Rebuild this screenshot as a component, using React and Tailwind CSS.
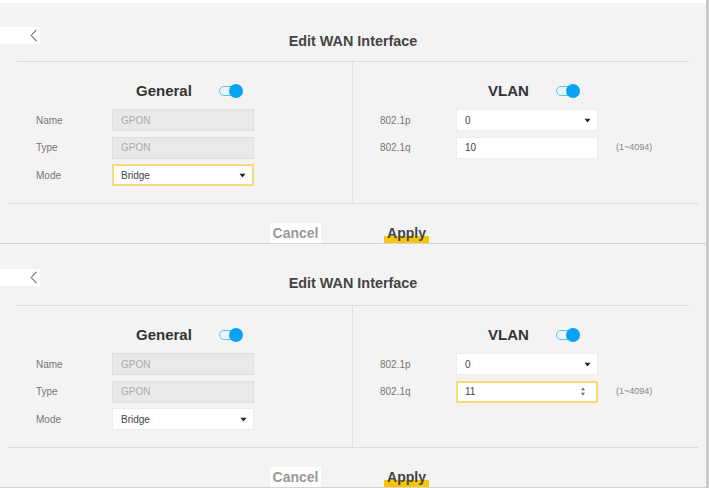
import React from "react";

const font = { fontFamily: '"Liberation Sans", Arial, sans-serif' };

function Toggle() {
  return (
    <div className="relative flex h-[14px] w-[25px] items-center">
      <div className="h-[10px] w-[18px] rounded-full border border-[#63bdf0] bg-[#eaf6fd]" />
      <div className="ml-[-8px] h-[14px] w-[14px] rounded-full bg-[#0aa2f5]" />
    </div>
  );
}

function Caret() {
  return (
    <svg width="7" height="5" viewBox="0 0 7 5" className="mr-[6px]">
      <path d="M0.5 0.8 L6.5 0.8 L3.5 4.6 Z" fill="#222" />
    </svg>
  );
}

function Spinner() {
  return (
    <svg width="6" height="11" viewBox="0 0 6 11" className="mr-[10px]">
      <path d="M1 4.2 L5 4.2 L3 1.4 Z" fill="#666" />
      <path d="M1 6.8 L5 6.8 L3 9.6 Z" fill="#666" />
    </svg>
  );
}

function Field({ value, kind, focused }) {
  const border = focused
    ? "border-2 border-[#f6d978] pl-[7px]"
    : kind === "disabled"
    ? "border border-[#dedede] pl-[8px]"
    : "border border-[#ececec] pl-[8px]";
  const bg = kind === "disabled" ? "bg-[#e9e9e9] text-[#aaaaaa]" : "bg-white text-[#444]";
  return (
    <div
      className={`flex h-[22px] w-[142px] items-center justify-between text-[10px] ${border} ${bg}`}
    >
      <span>{value}</span>
      {kind === "select" && <Caret />}
      {kind === "number" && focused && <Spinner />}
    </div>
  );
}

function Row({ label, children }) {
  return (
    <div className="flex h-[22px] items-center">
      <div className="w-[76px] text-[10px] text-[#777]">{label}</div>
      {children}
    </div>
  );
}

function Panel({ modeFocused, vlanFocused, vlanValue, topStrip }) {
  return (
    <div className="flex h-[244px] flex-col border-b border-[#d4d4d4] bg-[#f3f3f3]">
      <div className="flex h-[61px] items-start">
        <div className={`flex w-full items-start ${topStrip ? "border-t-[3px] border-white" : ""}`}>
          <div className={`flex h-[17px] w-[40px] items-center justify-end bg-white pr-[2px] ${topStrip ? "mt-[24px]" : "mt-[25px]"}`}>
            <svg width="8" height="13" viewBox="0 0 8 13">
              <path d="M6.5 0.8 L1.2 6.5 L6.5 12.2" stroke="#333" strokeWidth="1" fill="none" />
            </svg>
          </div>
          <div className={`flex-1 text-center text-[14.4px] font-bold leading-[18px] text-[#444] ${topStrip ? "mt-[29px]" : "mt-[30px]"}`}>
            Edit WAN Interface
          </div>
          <div className="w-[40px]" />
        </div>
      </div>
      <div className="mx-[17px] h-px bg-[#dcdcdc]" />
      <div className="mx-[17px] flex h-[141px]">
        <div className="w-[336px] border-r border-[#e2e2e2]">
          <div className="ml-[119px] mt-[19px] flex h-[20px] items-center gap-[27px]">
            <span className="text-[15px] font-bold text-[#333]">General</span>
            <Toggle />
          </div>
          <div className="ml-[19px] mt-[8px] flex flex-col gap-[5.5px]">
            <Row label="Name">
              <Field value="GPON" kind="disabled" />
            </Row>
            <Row label="Type">
              <Field value="GPON" kind="disabled" />
            </Row>
            <Row label="Mode">
              <Field value="Bridge" kind="select" focused={modeFocused} />
            </Row>
          </div>
        </div>
        <div className="flex-1">
          <div className="ml-[135px] mt-[19px] flex h-[20px] items-center gap-[27px]">
            <span className="text-[15px] font-bold text-[#333]">VLAN</span>
            <Toggle />
          </div>
          <div className="ml-[27px] mt-[8px] flex flex-col gap-[5.5px]">
            <Row label="802.1p">
              <Field value="0" kind="select" />
            </Row>
            <Row label="802.1q">
              <Field value={vlanValue} kind="number" focused={vlanFocused} />
              <span className="ml-[18px] text-[9px] text-[#888]">(1~4094)</span>
            </Row>
          </div>
        </div>
      </div>
      <div className="mx-[8px] h-px bg-[#dcdcdc]" />
      <div className="mt-[19px] flex">
        <div className="ml-[270px] flex h-[20px] w-[51px] items-center justify-center bg-white text-[14px] font-bold text-[#999]">
          Cancel
        </div>
        <div className="ml-[63px] flex h-[20px] w-[45px] items-center justify-center bg-[linear-gradient(transparent_13px,#f7c600_13px)] text-[14px] font-bold text-[#444]">
          Apply
        </div>
      </div>
    </div>
  );
}

export default function App() {
  return (
    <div style={font} className="h-[488px] w-[709px] overflow-hidden border-r-[3px] border-[#c9c9c9] bg-[#f3f3f3]">
      <Panel modeFocused vlanValue="10" topStrip />
      <Panel vlanFocused vlanValue="11" />
    </div>
  );
}
